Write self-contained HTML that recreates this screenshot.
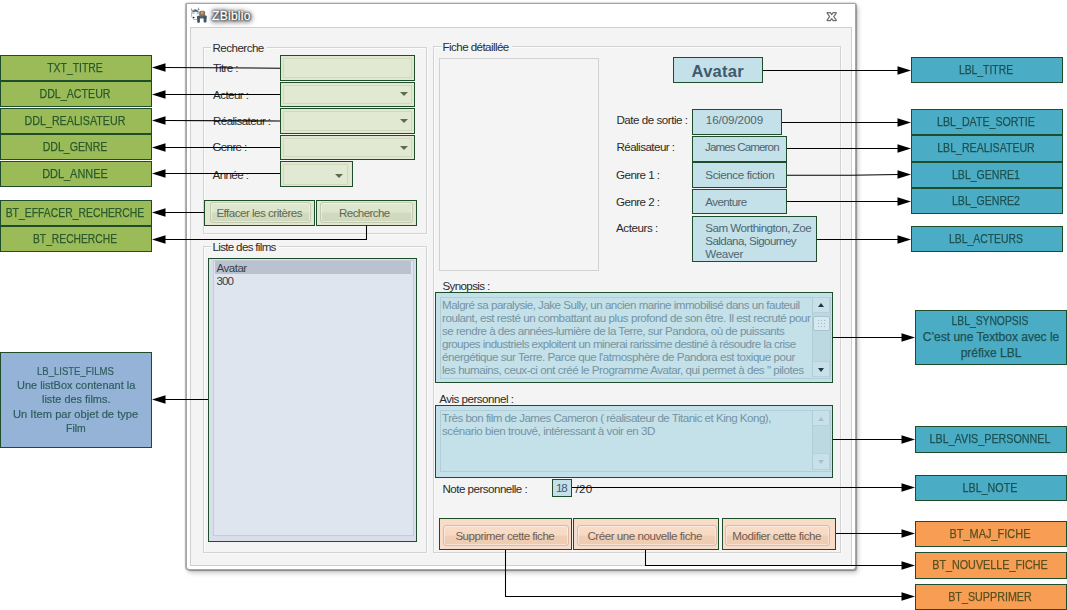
<!DOCTYPE html>
<html>
<head>
<meta charset="utf-8">
<title>ZBiblio</title>
<style>
*{box-sizing:border-box;margin:0;padding:0}
html,body{width:1067px;height:610px;overflow:hidden;background:#fff}
body{position:relative;font-family:"Liberation Sans",sans-serif;font-size:11.6px;color:#222}
.a{position:absolute}
#win{left:186px;top:3px;width:670px;height:567px;background:#fff;border:1px solid #a6a6a6;border-radius:1px 1px 3px 3px;box-shadow:0 0 2px 0 rgba(0,0,0,.35),-1px 0 1px 0 rgba(0,0,0,.22),1px 1px 1px 0 rgba(0,0,0,.25),2px 3px 5px rgba(0,0,0,.22)}
#client{left:190px;top:27px;width:662px;height:539px;background:#f4f4f4;border:1px solid #cfcfcf}
#title{left:212px;top:8px;font-size:12px;line-height:16px;color:#fff;letter-spacing:.3px;-webkit-text-stroke:.35px #fff;text-shadow:0 0 1px #111,0 0 2px #111,0 0 3px #222,0 0 5px #444,0 0 7px #777,1px 2px 5px #555}
.gb{border:1px solid #d3d3d3;box-shadow:inset 1px 1px 0 #fbfbfb,1px 1px 0 #fbfbfb}
.lg{background:#f4f4f4;padding:0 2px;line-height:13px;letter-spacing:-.42px;color:#2b2b2b;white-space:nowrap}
.t{line-height:13px;letter-spacing:-.42px;color:#2b2b2b;white-space:nowrap}
.hg{background:#e0e8d0;border:1px solid #1e4d2b}
.hb{background:#c4e0e9;border:1px solid #1e4d2b}
.ho{background:#f8dcc7;border:1px solid #1e4d2b}
.hl{background:#d8dfea;border:1px solid #1e4d2b}
.in{position:absolute;left:2px;top:2px;right:2px;bottom:2px;border:1px solid #d0d8bd;background:#e1e9d2}
.tri{position:absolute;width:0;height:0;border-left:4px solid transparent;border-right:4px solid transparent;border-top:4px solid #5e6b4c}
.btn{position:absolute;border:1px solid #c3cab2;border-radius:3px;text-align:center;line-height:18px;letter-spacing:-.42px;white-space:nowrap;box-shadow:inset 0 0 0 1px rgba(255,255,255,.45)}
.hg .btn{background:linear-gradient(#e0e7d1 0%,#dde5cc 48%,#d2dbbf 52%,#cfd8bb 100%);color:#5f6855}
.ho .btn{background:linear-gradient(#f8ddc9 0%,#f6d9c3 48%,#f0cfb6 52%,#eecbb1 100%);color:#7d695c;border-color:#d9bba6}
.c{border:1px solid #1e4d2b;text-align:center;white-space:nowrap;font-size:12px;-webkit-text-stroke:.25px}
.c span{display:block;margin:0 -29.4px 0 -30.6px;transform:scaleX(.868);transform-origin:50% 50%}
.cg{background:#9bbb59;color:#2a5a2c}
.cb{background:#4bacc6;color:#1e514f}
.co{background:#f79d54;color:#5a5020}
.cl{background:#95b3d7;color:#2e5e5e}
.clt{color:#2e5e5e;-webkit-text-stroke:.2px}
.v{color:#4f6670}
.bg{color:#5f6855}
.bo{color:#6f5d51}
.li{color:#3a3f4a}
.av{color:#3e5b6d;line-height:18px}
.g{color:#7594a3}
.sb{background:#bcd8e1;border-left:1px solid #b2ccd5}
.sbb{background:#c8e1e9;border:1px solid #b7d1da;border-left:0}
svg{position:absolute;left:0;top:0}
</style>
</head>
<body>
<div id="win" class="a"></div>
<div id="client" class="a"></div>
<svg class="a" style="left:189px;top:5px" width="20" height="20" viewBox="189 5 20 20">
<g filter="url(#ib)">
<path d="M190.8 7.8l2.2 2.9-1.3 .9z" fill="#7a8189"/>
<path d="M198.8 7.0l.6 3.0-1.9 .5z" fill="#7a8189"/>
<ellipse cx="195.4" cy="14.6" rx="3.9" ry="5.1" fill="#fdfdfd" stroke="#8f989f" stroke-width=".8"/>
<path d="M192.0 12.6q3.4-6.2 6.9 0q-3.4-1.8-6.9 0z" fill="#5f666c"/>
<rect x="192.6" y="12.4" width="1.9" height="1.6" fill="#86c5cf"/>
<rect x="196.6" y="12.4" width="1.9" height="1.6" fill="#86c5cf"/>
<circle cx="193.7" cy="17.5" r=".8" fill="#222"/>
<rect x="199.3" y="10.7" width="5.8" height="5.6" rx="1.6" fill="#8d6f55"/>
<rect x="200.9" y="11.2" width="2.5" height="3.2" rx="1" fill="#b29c88"/>
<rect x="197.2" y="15.9" width="9.4" height="2.6" fill="#56626c"/>
<rect x="197.2" y="16" width="2.7" height="6.7" rx=".8" fill="#46525c"/>
<rect x="203.6" y="15.6" width="2.9" height="7" rx=".8" fill="#46525c"/>
</g>
<defs><filter id="ib" x="-20%" y="-20%" width="140%" height="140%"><feGaussianBlur stdDeviation=".35"/></filter></defs>
</svg>
<svg class="a" style="left:824px;top:10px" width="16" height="14" viewBox="824 10 16 14"><path d="M827 12.9Q827 12.7 827.4 12.7H830.3L831.7 14.5L833.1 12.7H836Q836.5 12.7 836.3 13.1L833.8 16.6L836.3 20.1Q836.5 20.5 836 20.5H833.1L831.7 18.7L830.3 20.5H827.4Q826.9 20.5 827.1 20.1L829.6 16.6Z" fill="#fff" stroke="#707070" stroke-width="1.25" stroke-linejoin="round"/></svg>
<div id="title" class="a">ZBiblio</div>
<div class="a gb" style="left:203px;top:47px;width:224px;height:187px"></div>
<div class="a" style="left:210.5px;top:43.0px;width:56.8px;height:10px;background:#f4f4f4"></div><div class="a t " style="left:212.5px;top:41.0px;letter-spacing:-0.533px">Recherche</div>
<div class="a gb" style="left:203px;top:246px;width:224px;height:307px"></div>
<div class="a" style="left:210.5px;top:242.4px;width:68.9px;height:10px;background:#f4f4f4"></div><div class="a t " style="left:212.5px;top:240.0px;letter-spacing:-0.682px">Liste des films</div>
<div class="a gb" style="left:433px;top:46px;width:408px;height:507px"></div>
<div class="a" style="left:440.5px;top:42.4px;width:71.8px;height:10px;background:#f4f4f4"></div><div class="a t " style="left:442.5px;top:40.0px;letter-spacing:-0.569px">Fiche détaillée</div>
<div class="a t " style="left:213.0px;top:61.0px;letter-spacing:-0.633px">Titre :</div>
<div class="a t " style="left:213.0px;top:88.0px;letter-spacing:-0.564px">Acteur :</div>
<div class="a t " style="left:213.0px;top:114.0px;letter-spacing:-0.590px">Réalisateur :</div>
<div class="a t " style="left:212.5px;top:140.0px;letter-spacing:-0.677px">Genre :</div>
<div class="a t " style="left:212.5px;top:168.0px;letter-spacing:-0.594px">Année :</div>
<div class="a hg" style="left:280px;top:55px;width:135px;height:26px"><div class="in"></div></div>
<div class="a hg" style="left:280px;top:82px;width:135px;height:25px"><div class="in"></div><div class="tri" style="right:6px;top:9px"></div></div>
<div class="a hg" style="left:280px;top:108px;width:135px;height:26px"><div class="in"></div><div class="tri" style="right:6px;top:10px"></div></div>
<div class="a hg" style="left:280px;top:135px;width:135px;height:25px"><div class="in"></div><div class="tri" style="right:6px;top:10px"></div></div>
<div class="a hg" style="left:280px;top:161px;width:73px;height:26px"><div class="in" style="right:4px;bottom:1px"></div><div class="tri" style="right:9px;top:12px"></div></div>
<div class="a hg" style="left:204px;top:200px;width:111px;height:26px"><div class="btn" style="left:5px;top:1px;width:101px;height:21px"></div></div>
<div class="a hg" style="left:316px;top:200px;width:101px;height:26px"><div class="btn" style="left:3px;top:1px;width:93px;height:21px"></div></div>
<div class="a t bg" style="left:216.4px;top:206.0px;letter-spacing:-0.510px">Effacer les critères</div>
<div class="a t bg" style="left:339.0px;top:206.0px;letter-spacing:-0.596px">Recherche</div>
<div class="a hl" style="left:208px;top:258px;width:209px;height:284px"><div class="a" style="left:4px;top:1px;width:201px;height:276px;border:1px solid #c5ccd9;background:#dfe5ef"></div><div class="a" style="left:6px;top:2px;width:196px;height:13px;background:#bbc2cf"></div></div>
<div class="a t li" style="left:216.4px;top:261.0px;letter-spacing:-0.500px">Avatar</div>
<div class="a t li" style="left:216.4px;top:274.0px;letter-spacing:-0.922px">300</div>
<div class="a" style="left:439px;top:58px;width:160px;height:213px;border:1px solid #d2d2d2"></div>
<div class="a t " style="left:616.4px;top:113.0px;letter-spacing:-0.468px">Date de sortie :</div>
<div class="a t " style="left:616.4px;top:140.0px;letter-spacing:-0.532px">Réalisateur :</div>
<div class="a t " style="left:616.0px;top:168.0px;letter-spacing:-0.542px">Genre 1 :</div>
<div class="a t " style="left:616.0px;top:195.0px;letter-spacing:-0.542px">Genre 2 :</div>
<div class="a t " style="left:616.0px;top:221.0px;letter-spacing:-0.431px">Acteurs :</div>
<div class="a hb" style="left:673px;top:57px;width:90px;height:26px"></div>
<div class="a t av" style="left:691.6px;top:62.0px;letter-spacing:0.270px;font-size:16.5px;font-weight:bold">Avatar</div>
<div class="a hb" style="left:692px;top:109px;width:90px;height:26px"></div>
<div class="a t v" style="left:705.8px;top:113.0px;letter-spacing:-0.069px">16/09/2009</div>
<div class="a hb" style="left:692px;top:136px;width:95px;height:26px"></div>
<div class="a t v" style="left:705.0px;top:140.0px;letter-spacing:-0.871px">James Cameron</div>
<div class="a hb" style="left:692px;top:162px;width:95px;height:26px"></div>
<div class="a t v" style="left:705.3px;top:168.0px;letter-spacing:-0.390px">Science fiction</div>
<div class="a hb" style="left:692px;top:189px;width:95px;height:25px"></div>
<div class="a t v" style="left:705.3px;top:195.0px;letter-spacing:-0.599px">Aventure</div>
<div class="a hb" style="left:692px;top:216px;width:125px;height:46px"></div>
<div class="a t v" style="left:705.3px;top:221.0px;letter-spacing:-0.499px">Sam Worthington, Zoe</div>
<div class="a t v" style="left:705.3px;top:234.0px;letter-spacing:-0.582px">Saldana, Sigourney</div>
<div class="a t v" style="left:705.3px;top:247.0px;letter-spacing:-0.347px">Weaver</div>
<div class="a t " style="left:442.5px;top:279.0px;letter-spacing:-0.643px">Synopsis :</div>
<div class="a hb" style="left:435px;top:292px;width:398px;height:91px"><div class="a" style="left:4px;top:4px;width:391px;height:82px;border:1px solid #b1ced8"></div><div class="a sb" style="left:376px;top:4px;width:18px;height:80px"><div class="a sbb" style="left:0;top:0;width:17px;height:16px"></div><div class="a" style="left:4.8px;top:6.2px;width:0;height:0;border-left:3.7px solid transparent;border-right:3.7px solid transparent;border-bottom:4px solid #1f3942"></div><div class="a" style="left:0;top:19px;width:17px;height:15px;border:1px solid #a9c4cd;border-radius:2px;background:#d5e9ef"></div><div class="a" style="left:5px;top:23px;width:7px;height:7px;background:repeating-linear-gradient(90deg,#9fb9c3 0 1.4px,transparent 1.4px 2.8px);-webkit-mask:repeating-linear-gradient(0deg,#000 0 1.4px,transparent 1.4px 2.8px)"></div><div class="a sbb" style="left:0;top:64px;width:17px;height:16px"></div><div class="a" style="left:4.8px;top:70.6px;width:0;height:0;border-left:3.7px solid transparent;border-right:3.7px solid transparent;border-top:4px solid #1f3942"></div></div></div>
<div class="a t g" style="left:442.0px;top:298.0px;letter-spacing:-0.517px">Malgré sa paralysie, Jake Sully, un ancien marine immobilisé dans un fauteuil</div>
<div class="a t g" style="left:442.0px;top:311.0px;letter-spacing:-0.439px">roulant, est resté un combattant au plus profond de son être. Il est recruté pour</div>
<div class="a t g" style="left:442.0px;top:324.0px;letter-spacing:-0.506px">se rendre à des années-lumière de la Terre, sur Pandora, où de puissants</div>
<div class="a t g" style="left:442.0px;top:337.0px;letter-spacing:-0.547px">groupes industriels exploitent un minerai rarissime destiné à résoudre la crise</div>
<div class="a t g" style="left:442.0px;top:350.0px;letter-spacing:-0.473px">énergétique sur Terre. Parce que l'atmosphère de Pandora est toxique pour</div>
<div class="a t g" style="left:442.0px;top:363.0px;letter-spacing:-0.478px">les humains, ceux-ci ont créé le Programme Avatar, qui permet à des " pilotes</div>
<div class="a t " style="left:439.2px;top:392.0px;letter-spacing:-0.505px">Avis personnel :</div>
<div class="a hb" style="left:435px;top:405px;width:398px;height:73px"><div class="a" style="left:4px;top:4px;width:391px;height:62px;border:1px solid #b1ced8"></div><div class="a sb" style="left:376px;top:4px;width:18px;height:60px"><div class="a sbb" style="left:0;top:0;width:17px;height:16px"></div><div class="a" style="left:4.8px;top:6.8px;width:0;height:0;border-left:3.7px solid transparent;border-right:3.7px solid transparent;border-bottom:4px solid #a6c1ca"></div><div class="a sbb" style="left:0;top:43px;width:17px;height:17px"></div><div class="a" style="left:4.8px;top:49.5px;width:0;height:0;border-left:3.7px solid transparent;border-right:3.7px solid transparent;border-top:4px solid #a6c1ca"></div></div></div>
<div class="a t g" style="left:442.0px;top:411.0px;letter-spacing:-0.515px">Très bon film de James Cameron ( réalisateur de Titanic et King Kong),</div>
<div class="a t g" style="left:442.0px;top:424.0px;letter-spacing:-0.440px">scénario bien trouvé, intéressant à voir en 3D</div>
<div class="a t " style="left:442.5px;top:482.0px;letter-spacing:-0.523px">Note personnelle :</div>
<div class="a hb" style="left:552px;top:479px;width:20px;height:18px"></div>
<div class="a t v" style="left:556.0px;top:481.0px;letter-spacing:-1.296px;color:#435c69">18</div>
<div class="a t " style="left:575.4px;top:482.0px;letter-spacing:0.342px">/20</div>
<div class="a ho" style="left:439px;top:518px;width:133px;height:32px"><div class="btn" style="left:3px;top:6px;width:126px;height:21px"></div></div>
<div class="a ho" style="left:573px;top:518px;width:146px;height:32px"><div class="btn" style="left:3px;top:6px;width:140px;height:21px"></div></div>
<div class="a ho" style="left:722px;top:518px;width:114px;height:32px"><div class="btn" style="left:2px;top:6px;width:105px;height:21px"></div></div>
<div class="a t bo" style="left:455.4px;top:529.0px;letter-spacing:-0.507px">Supprimer cette fiche</div>
<div class="a t bo" style="left:587.4px;top:529.0px;letter-spacing:-0.460px">Créer une nouvelle fiche</div>
<div class="a t bo" style="left:732.2px;top:529.0px;letter-spacing:-0.421px">Modifier cette fiche</div>
<div class="a c cg" style="left:0px;top:55px;width:152px;height:26px;line-height:24px"><span style="transform:scaleX(0.867)">TXT_TITRE</span></div>
<div class="a c cg" style="left:0px;top:81px;width:152px;height:26px;line-height:24px"><span style="transform:scaleX(0.889)">DDL_ACTEUR</span></div>
<div class="a c cg" style="left:0px;top:108px;width:152px;height:26px;line-height:24px"><span style="transform:scaleX(0.892)">DDL_REALISATEUR</span></div>
<div class="a c cg" style="left:0px;top:134px;width:152px;height:26px;line-height:24px"><span style="transform:scaleX(0.882)">DDL_GENRE</span></div>
<div class="a c cg" style="left:0px;top:161px;width:152px;height:26px;line-height:24px"><span style="transform:scaleX(0.911)">DDL_ANNEE</span></div>
<div class="a c cg" style="left:0px;top:200px;width:152px;height:26px;line-height:24px"><span style="transform:scaleX(0.866)">BT_EFFACER_RECHERCHE</span></div>
<div class="a c cg" style="left:0px;top:226px;width:152px;height:26px;line-height:24px"><span style="transform:scaleX(0.857)">BT_RECHERCHE</span></div>
<div class="a c cl" style="left:0;top:352px;width:152px;height:96px"></div>
<div class="a t clt" style="left:37.4px;top:365.0px;font-size:10.8px;letter-spacing:0;transform-origin:0 50%;transform:scaleX(0.883)">LB_LISTE_FILMS</div>
<div class="a t clt" style="left:16.5px;top:379.2px;font-size:11.2px;letter-spacing:0;transform-origin:0 50%;transform:scaleX(0.981)">Une listBox contenant la</div>
<div class="a t clt" style="left:41.8px;top:393.3px;font-size:11.2px;letter-spacing:0;transform-origin:0 50%;transform:scaleX(0.974)">liste des films.</div>
<div class="a t clt" style="left:13.1px;top:407.9px;font-size:11.2px;letter-spacing:0;transform-origin:0 50%;transform:scaleX(0.997)">Un Item par objet de type</div>
<div class="a t clt" style="left:65.8px;top:422.2px;font-size:11.2px;letter-spacing:0;transform-origin:0 50%;transform:scaleX(0.933)">Film</div>
<div class="a c cb" style="left:911px;top:57px;width:152px;height:26px;line-height:24px"><span style="transform:scaleX(0.863)">LBL_TITRE</span></div>
<div class="a c cb" style="left:911px;top:109px;width:152px;height:26px;line-height:24px"><span style="transform:scaleX(0.888)">LBL_DATE_SORTIE</span></div>
<div class="a c cb" style="left:911px;top:135px;width:152px;height:27px;line-height:25px"><span style="transform:scaleX(0.883)">LBL_REALISATEUR</span></div>
<div class="a c cb" style="left:911px;top:162px;width:152px;height:26px;line-height:24px"><span style="transform:scaleX(0.879)">LBL_GENRE1</span></div>
<div class="a c cb" style="left:911px;top:188px;width:152px;height:26px;line-height:24px"><span style="transform:scaleX(0.879)">LBL_GENRE2</span></div>
<div class="a c cb" style="left:911px;top:226px;width:152px;height:26px;line-height:24px"><span style="transform:scaleX(0.867)">LBL_ACTEURS</span></div>
<div class="a c cb" style="left:915px;top:310px;width:152px;height:55px;font-size:12px;line-height:16px;padding-top:2px"><span style="transform:scaleX(.859)">LBL_SYNOPSIS</span>C’est une Textbox avec le<br>préfixe LBL</div>
<div class="a c cb" style="left:915px;top:426px;width:152px;height:27px;line-height:25px"><span style="transform:scaleX(0.894)">LBL_AVIS_PERSONNEL</span></div>
<div class="a c cb" style="left:915px;top:475px;width:152px;height:26px;line-height:24px"><span style="transform:scaleX(0.893)">LBL_NOTE</span></div>
<div class="a c co" style="left:915px;top:521px;width:152px;height:26px;line-height:24px"><span style="transform:scaleX(0.913)">BT_MAJ_FICHE</span></div>
<div class="a c co" style="left:915px;top:552px;width:152px;height:27px;line-height:25px"><span style="transform:scaleX(0.898)">BT_NOUVELLE_FICHE</span></div>
<div class="a c co" style="left:915px;top:584px;width:152px;height:26px;line-height:24px"><span style="transform:scaleX(0.896)">BT_SUPPRIMER</span></div>
<svg width="1067" height="610" viewBox="0 0 1067 610" fill="#000" stroke="#000" stroke-width="1.05">
<path d="M164 67.5L280 68.2"/><polygon stroke="none" points="152,67.5 165.5,63.3 165.5,71.7"/><path d="M164 94.5L280 94.5"/><polygon stroke="none" points="152,94.5 165.5,90.3 165.5,98.7"/><path d="M164 120.5L280 121"/><polygon stroke="none" points="152,120.5 165.5,116.3 165.5,124.7"/><path d="M164 147.5L280 147.5"/><polygon stroke="none" points="152,147.5 165.5,143.3 165.5,151.7"/><path d="M164 173.5L280 173.5"/><polygon stroke="none" points="152,173.5 165.5,169.3 165.5,177.7"/><path d="M164 212.5L204 212.5"/><polygon stroke="none" points="152,212.5 165.5,208.3 165.5,216.7"/><path d="M164 399.5L208 399.5"/><polygon stroke="none" points="152,399.5 165.5,395.3 165.5,403.7"/><path d="M164 239.5H366.5V225.5" fill="none"/><polygon stroke="none" points="152,239.5 165.5,235.3 165.5,243.7"/><path fill="none" d="M763 70.5L850 70.5L899 70.5"/><polygon stroke="none" points="911,70.5 897.5,66.3 897.5,74.7"/><path fill="none" d="M782 122.5L850 122.5L899 122.5"/><polygon stroke="none" points="911,122.5 897.5,118.3 897.5,126.7"/><path fill="none" d="M787 148.5L850 148.5L899 148.5"/><polygon stroke="none" points="911,148.5 897.5,144.3 897.5,152.7"/><path fill="none" d="M787 175.3L850 175.3L899 174.5"/><polygon stroke="none" points="911,174.5 897.5,170.3 897.5,178.7"/><path fill="none" d="M787 201.5L850 201.5L899 201.5"/><polygon stroke="none" points="911,201.5 897.5,197.3 897.5,205.7"/><path fill="none" d="M817 239.5L850 239.5L899 239.5"/><polygon stroke="none" points="911,239.5 897.5,235.3 897.5,243.7"/><path d="M833 337.5H903"/><polygon stroke="none" points="915,337.5 901.5,333.3 901.5,341.7"/><path d="M833 439.5H903"/><polygon stroke="none" points="915,439.5 901.5,435.3 901.5,443.7"/><path d="M572 487.5H903"/><polygon stroke="none" points="915,487.5 901.5,483.3 901.5,491.7"/><path d="M836 533.5H903"/><polygon stroke="none" points="915,533.5 901.5,529.3 901.5,537.7"/><path d="M645.5 550V565.5H903" fill="none"/><polygon stroke="none" points="915,565.5 901.5,561.3 901.5,569.7"/><path d="M505.5 550V596.5H903" fill="none"/><polygon stroke="none" points="915,596.5 901.5,592.3 901.5,600.7"/></svg>
</body>
</html>
